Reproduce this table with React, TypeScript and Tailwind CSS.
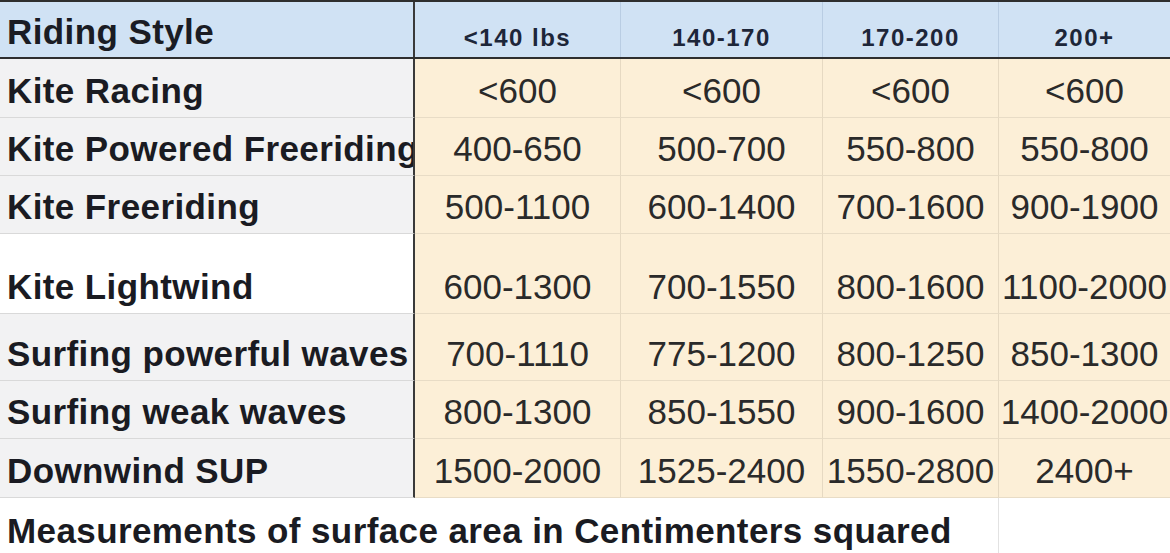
import React from "react";

type Row = { label: string; vals: string[]; h: string; bg: string };

const rows: Row[] = [
  { label: "Kite Racing", vals: ["<600", "<600", "<600", "<600"], h: "h-[59px]", bg: "bg-[#f2f2f3]" },
  { label: "Kite Powered Freeriding", vals: ["400-650", "500-700", "550-800", "550-800"], h: "h-[58px]", bg: "bg-[#f2f2f3]" },
  { label: "Kite Freeriding", vals: ["500-1100", "600-1400", "700-1600", "900-1900"], h: "h-[58px]", bg: "bg-[#f2f2f3]" },
  { label: "Kite Lightwind", vals: ["600-1300", "700-1550", "800-1600", "1100-2000"], h: "h-[80px]", bg: "bg-white" },
  { label: "Surfing powerful waves", vals: ["700-1110", "775-1200", "800-1250", "850-1300"], h: "h-[67px]", bg: "bg-[#f2f2f3]" },
  { label: "Surfing weak waves", vals: ["800-1300", "850-1550", "900-1600", "1400-2000"], h: "h-[58px]", bg: "bg-[#f2f2f3]" },
  { label: "Downwind SUP", vals: ["1500-2000", "1525-2400", "1550-2800", "2400+"], h: "h-[59px]", bg: "bg-[#f2f2f3]" },
];

const colW = ["w-[206px]", "w-[202px]", "w-[176px]", "w-[171px]"];
const headers = ["<140 lbs", "140-170", "170-200", "200+"];

export default function App() {
  return (
    <div
      className="w-[1170px] h-[553px] overflow-hidden bg-white border-t-2 border-[#2e2e2e]"
      style={{ fontFamily: "'Liberation Sans', Arial, sans-serif" }}
    >
      {/* header */}
      <div className="flex h-[57px] bg-[#d0e2f4] border-b-2 border-[#2e2e2e]">
        <div className="w-[415px] shrink-0 border-r-2 border-[#3a3a3a] flex items-end pl-[7px] pb-[8px]">
          <span className="text-[35px] leading-none font-bold tracking-[0.4px] text-[#1a1c24] whitespace-nowrap">Riding Style</span>
        </div>
        {headers.map((h, i) => (
          <div
            key={h}
            className={`${colW[i]} shrink-0 flex items-end justify-center pb-[7px] ${i < 3 ? "border-r border-[#b9cde3]" : ""}`}
          >
            <span className="text-[24px] leading-none font-bold tracking-[1.5px] text-[#1d2639] whitespace-nowrap">{h}</span>
          </div>
        ))}
      </div>

      {rows.map((r) => (
        <div key={r.label} className={`flex ${r.h}`}>
          <div
            className={`w-[415px] shrink-0 ${r.bg} border-r-2 border-r-[#3a3a3a] border-b border-b-[#d9d9d9] flex items-end pl-[7px] pb-[9px] overflow-hidden`}
          >
            <span className="text-[35px] leading-none font-bold tracking-[0.4px] text-[#1a1b22] whitespace-nowrap">{r.label}</span>
          </div>
          {r.vals.map((v, i) => (
            <div
              key={i}
              className={`${colW[i]} shrink-0 bg-[#fcefd7] border-b border-b-[#e8dcc6] ${i < 3 ? "border-r border-r-[#e6d9c2]" : ""} flex items-end justify-center pb-[9px] overflow-visible`}
            >
              <span className="text-[35px] leading-none text-[#2a2a2a] whitespace-nowrap">{v}</span>
            </div>
          ))}
        </div>
      ))}

      {/* footer */}
      <div className="flex h-[55px]">
        <div className="w-[999px] shrink-0 bg-white border-r border-[#e2e2e2] flex items-end pl-[7px] pb-[5px]">
          <span className="text-[35px] leading-none font-bold tracking-[0.4px] text-[#1a1b22] whitespace-nowrap">
            Measurements of surface area in Centimenters squared
          </span>
        </div>
        <div className="w-[171px] shrink-0 bg-white" />
      </div>
    </div>
  );
}
